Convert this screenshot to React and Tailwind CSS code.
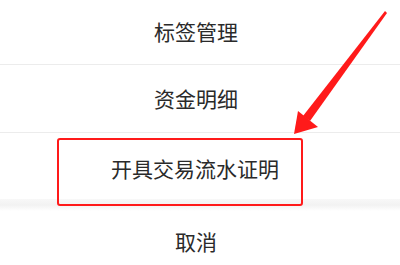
export default function App() {
  const font = { fontFamily: '"Noto Sans CJK SC", "Noto Sans", sans-serif' };

  return (
    <div className="relative w-[400px] h-[265px] overflow-hidden bg-white text-[#2a2a2a]" style={font}>
      <div className="flex flex-col">
        <div className="h-[65px] flex items-center justify-center text-[21px] pr-[8px] border-b border-[#ececec]">
          标签管理
        </div>
        <div className="h-[68px] flex items-center justify-center text-[21px] pr-[8px] border-b border-[#ececec]">
          资金明细
        </div>
        <div className="h-[66px] flex items-center justify-center text-[21px] pt-[6px] pr-[10px]">
          开具交易流水证明
        </div>
        <div className="h-[12px] bg-gradient-to-b from-[#f8f8f8] via-[#f2f2f2] to-white" />
        <div className="h-[54px] flex items-center justify-center text-[21px] pt-[8px] pr-[8px]">
          取消
        </div>
      </div>

      {/* annotation box */}
      <div className="absolute left-[57px] top-[138px] w-[246px] h-[68px] border-[2.5px] border-[#ff1a1a] rounded-[3px]" />

      {/* annotation arrow */}
      <svg className="absolute left-0 top-0" width="400" height="265" viewBox="0 0 400 265">
        <path d="M385 11 L387 13 L310 121 L303 116 Z" fill="#ff1a1a" />
        <path d="M294 134 L298 111 L318 127 Z" fill="#ff1a1a" />
      </svg>
    </div>
  );
}
